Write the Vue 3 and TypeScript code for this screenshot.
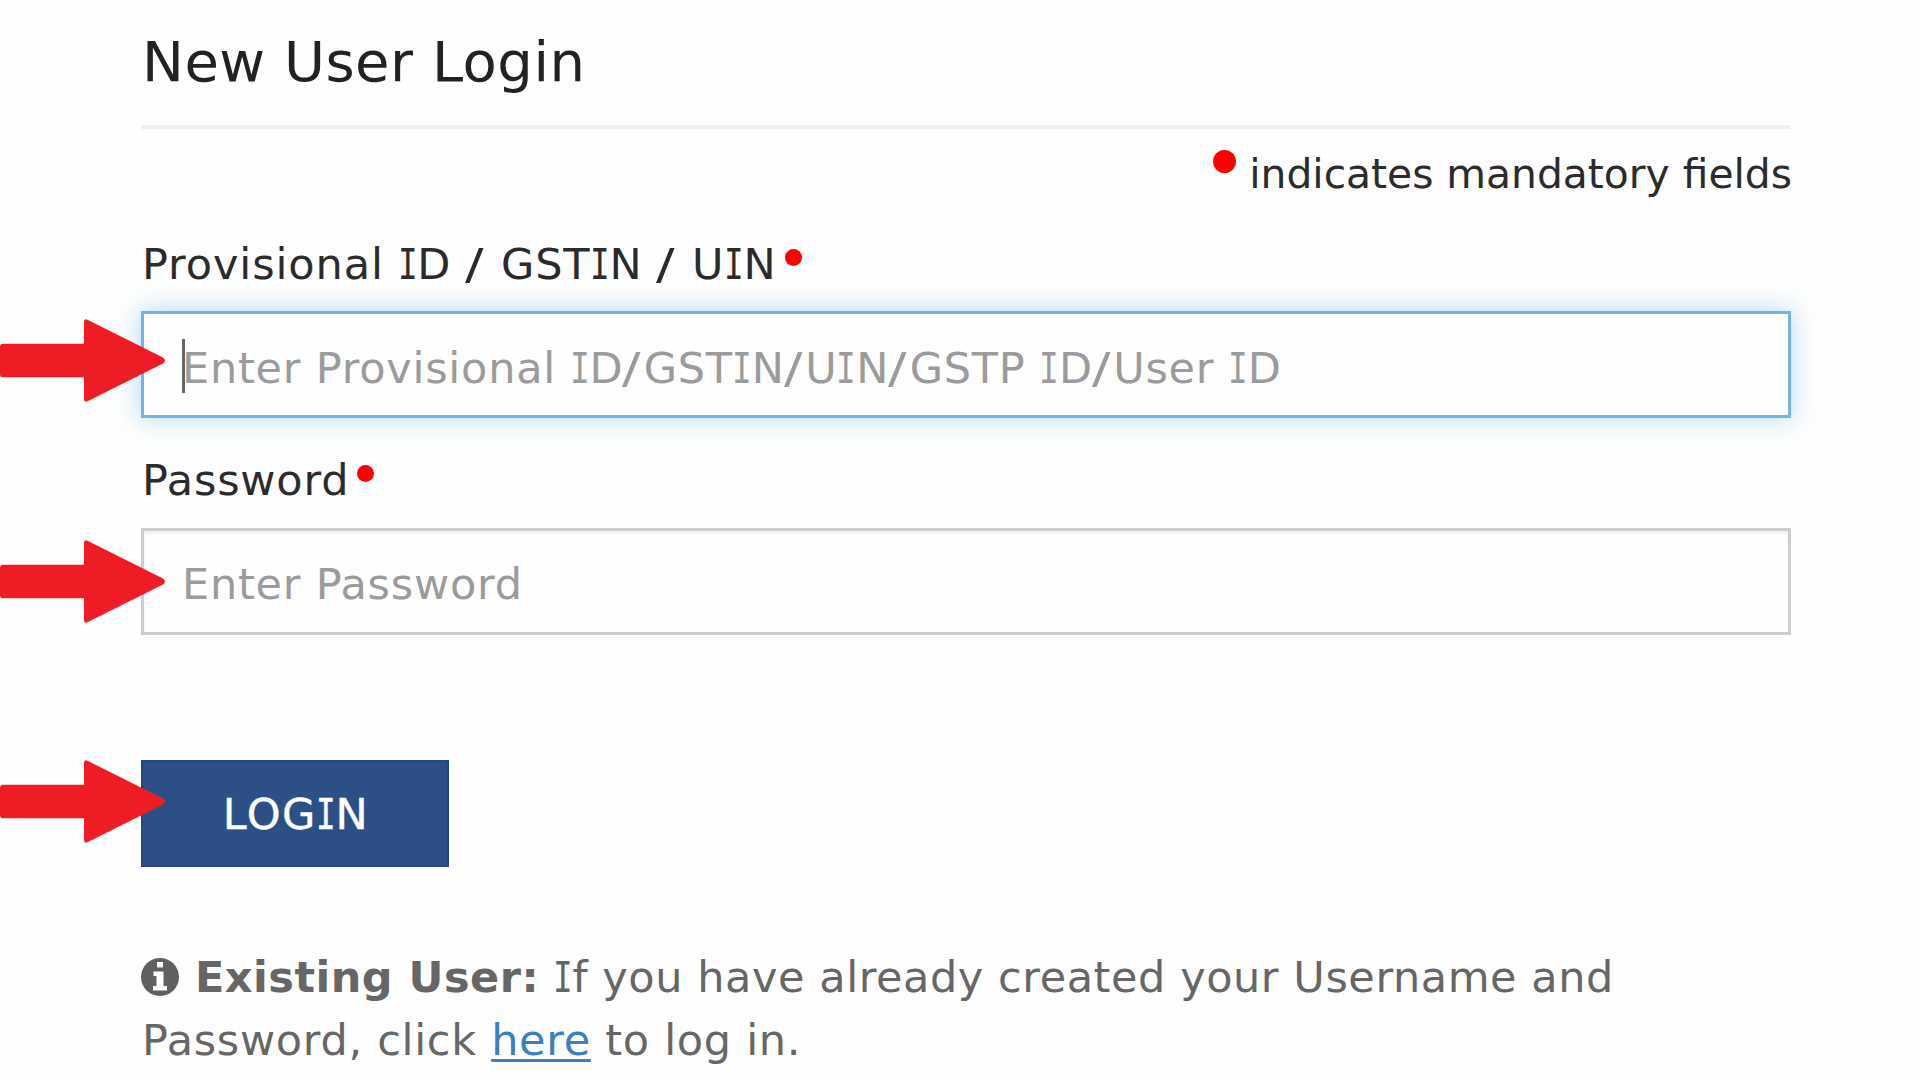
<script setup lang="ts">
import { h, type FunctionalComponent } from 'vue'

// Gives capital I its slab serifs and the slash its wider set.
const Txt: FunctionalComponent<{ t: string }> = (props) =>
  h(
    'span',
    { class: 'txt' },
    props.t
      .split(/([I/])/)
      .filter((s) => s !== '')
      .map((s) => (s === 'I' ? h('span', { class: 'slab' }, s) : s === '/' ? h('span', { class: 'slash' }, s) : s)),
  )
Txt.props = ['t']

interface Field {
  id: string
  label: string
  placeholder: string
  focused: boolean
}

const fields: Field[] = [
  {
    id: 'user',
    label: 'Provisional ID / GSTIN / UIN',
    placeholder: 'Enter Provisional ID/GSTIN/UIN/GSTP ID/User ID',
    focused: true,
  },
  { id: 'password', label: 'Password', placeholder: 'Enter Password', focused: false },
]
</script>

<template>
  <main class="page">
    <h1 class="title">New User Login</h1>
    <hr class="rule" />
    <p class="mandatory"><i class="dot dot-big"></i><span>indicates mandatory fields</span></p>

    <div v-for="f in fields" :key="f.id" class="group" :class="f.id">
      <div class="label"><Txt :t="f.label" /><i class="dot"></i></div>
      <div class="field" :class="{ focused: f.focused }" role="textbox">
        <span v-if="f.focused" class="caret"></span>
        <span class="placeholder"><Txt :t="f.placeholder" /></span>
        <svg class="arrow" viewBox="0 0 165 84" preserveAspectRatio="none">
          <path d="M3 25H84V3Q84 -1 88 1L163 39Q167 42 163 45L88 83Q84 85 84 81V59H3Q0 59 0 56V28Q0 25 3 25Z" />
        </svg>
      </div>
    </div>

    <div class="actions">
      <button class="login" type="button"><Txt t="LOGIN" /></button>
      <svg class="arrow" viewBox="0 0 165 84" preserveAspectRatio="none">
        <path d="M3 25H84V3Q84 -1 88 1L163 39Q167 42 163 45L88 83Q84 85 84 81V59H3Q0 59 0 56V28Q0 25 3 25Z" />
      </svg>
    </div>

    <p class="existing">
      <svg class="info" viewBox="0 0 38 38">
        <circle cx="19" cy="19" r="19" />
        <path d="M16 4H22V9.500H16ZM12.500 13.500H22.500V28H26V32.500H12V28H15.500V18H12.500Z" fill="#fefefe" />
      </svg>
      <strong>Existing User:</strong> <Txt t="If you have already created your Username and" /><br />
      <span class="second">Password, click <a class="link">here</a> to log in.</span>
    </p>
  </main>
</template>

<style>
body {
  margin: 0;
  background: #fefefe;
}
.txt .slab {
  display: inline-block;
  width: 0.602em;
  margin: 0 -0.0705em 0 -0.0905em;
  letter-spacing: 0;
  font-family: 'DejaVu Sans Mono', monospace;
  transform: scaleX(0.76);
}
.txt .slash {
  display: inline-block;
  width: 0.454em;
  margin-right: 0.02em;
  text-align: center;
  letter-spacing: 0;
  transform: translateX(-1.5px) scaleX(1.28);
}
.txt .slab,
.txt .slash {
  position: relative;
  line-height: 1;
}
</style>

<style scoped>
.page {
  box-sizing: border-box;
  width: 1920px;
  height: 1080px;
  overflow: hidden;
  padding: 22px 129px 0 141px;
  font-family: 'DejaVu Sans', Verdana, sans-serif;
  font-size: 43px;
  letter-spacing: 0.8px;
  color: #2b2b2b;
}
.title {
  margin: 0 0 0 1px;
  height: 103px;
  line-height: 80px;
  font-size: 56px;
  font-weight: 400;
  letter-spacing: 0.5px;
  color: #222;
}
.rule {
  height: 4px;
  margin: 0;
  border: 0;
  background: #f0f0f0;
}
.mandatory {
  display: flex;
  justify-content: flex-end;
  height: 50px;
  margin: 20px -1px 41px 0;
  line-height: 50px;
  font-size: 40.8px;
  letter-spacing: 0;
}
.dot {
  flex: none;
  width: 17px;
  height: 17px;
  margin: 9px 0 0 8px;
  border-radius: 50%;
  background: #f00;
}
.dot-big {
  width: 23px;
  height: 23px;
  margin: 1px 13px 0 0;
}
.label {
  display: flex;
  height: 50px;
  margin-left: 1px;
  line-height: 49px;
  white-space: pre;
}
.user .label {
  letter-spacing: 0.91px;
}
.user .field {
  margin-top: 21px;
}
.password {
  margin-top: 38px;
}
.password .field {
  margin-top: 22px;
}
.field {
  position: relative;
  box-sizing: border-box;
  height: 107px;
  padding-left: 38px;
  border: 3px solid #cdcdcd;
  background: #fefefe;
  box-shadow: inset 0 3px 3px rgba(0, 0, 0, 0.05);
  line-height: 109px;
  letter-spacing: 0.77px;
  color: #9b9b9b;
  white-space: pre;
}
.password .field {
  line-height: 107px;
}
.focused {
  border-color: #74b3e6;
  box-shadow: 0 0 24px rgba(102, 175, 233, 0.5);
}
.caret {
  position: absolute;
  left: 38px;
  top: 25px;
  width: 3px;
  height: 54px;
  background: #666;
}
.arrow {
  position: absolute;
  left: -144px;
  top: 5px;
  width: 165px;
  height: 83px;
  fill: #ee1c25;
}
.password .arrow {
  top: 9px;
}
.actions {
  position: relative;
  height: 107px;
  margin-top: 125px;
}
.actions .arrow {
  left: -141px;
  top: 0;
}
.login {
  display: block;
  box-sizing: border-box;
  width: 308px;
  height: 107px;
  padding: 0 0 0 2px;
  border: 2px solid #28487c;
  background: #2c4f86;
  color: #fff;
  font: inherit;
  line-height: 105px;
  letter-spacing: 1.4px;
  -webkit-text-stroke: 0.4px #fff;
}
.existing {
  margin: 79px 0 0;
  line-height: 63px;
  letter-spacing: 0.57px;
  color: #666;
  white-space: nowrap;
}
.existing strong {
  letter-spacing: 0.5px;
}
.info {
  width: 38px;
  height: 38px;
  margin-right: 16px;
  vertical-align: -4px;
  fill: #606060;
}
.second {
  margin-left: 1px;
  letter-spacing: 0.7px;
}
.link {
  color: #3a80c0;
  text-decoration: underline;
  text-decoration-thickness: 3px;
  text-underline-offset: 4px;
  text-decoration-skip-ink: none;
}
</style>
